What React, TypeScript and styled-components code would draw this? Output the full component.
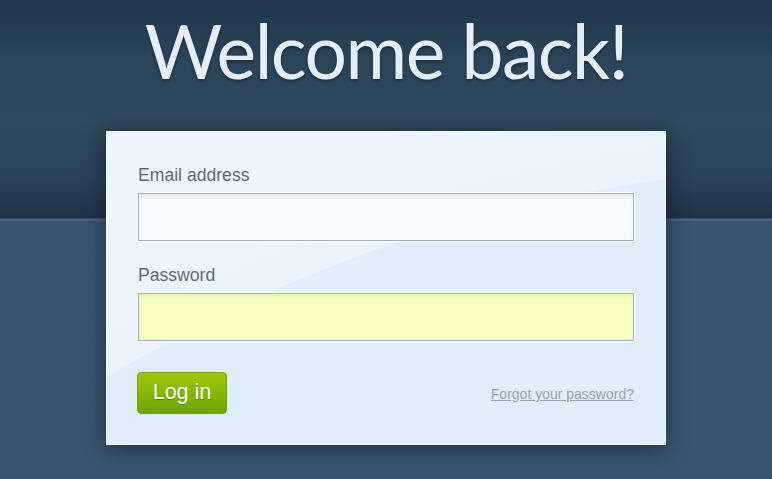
import React from "react";
import styled, { createGlobalStyle } from "styled-components";

const Global = createGlobalStyle`
  html, body { margin: 0; padding: 0; }
  body { background: #3a5572; }
`;

const Page = styled.div`
  min-height: 479px;
  display: flex;
  flex-direction: column;
  align-items: center;
  background:
    linear-gradient(to bottom,
      #21374b 0px,
      #2b4459 60px,
      #30495f 120px,
      #2a4257 180px,
      #1e3246 218px,
      #4c6883 219px,
      #4c6883 220px,
      #3b5673 221px,
      #3a5572 100%);
`;

const Title = styled.h1`
  margin: 0;
  height: 100px;
  font-family: Lato, "Open Sans", sans-serif;
  font-weight: 400;
  font-size: 75px;
  line-height: 101px;
  color: #e6edf5;
  text-shadow: 0 2px 3px rgba(0, 0, 0, 0.35);
  letter-spacing: -1.5px;
`;

const Card = styled.form`
  margin-top: 31px;
  width: 560px;
  box-sizing: border-box;
  padding: 34px 32px 31px;
  background:
    radial-gradient(circle 1466px at 760px 1500px,
      #dfedfa 0px, #e0eefa 1465px, #eaf4fd 1466.5px, #edf6fe 1600px);
  box-shadow: 0 4px 22px rgba(0, 0, 0, 0.45), inset 0 0 0 1px rgba(255, 255, 255, 0.7);
  display: flex;
  flex-direction: column;
`;

const Label = styled.label`
  display: block;
  font-family: "Liberation Sans", Arial, sans-serif;
  font-size: 17.6px;
  line-height: 20px;
  color: #5b6b7d;
  margin-bottom: 8px;
`;

const Input = styled.input<{ $fill: string }>`
  display: block;
  box-sizing: border-box;
  width: 496px;
  height: 48px;
  margin: 0 0 24px;
  border: 1px solid #9cb3cb;
  background: ${(p) => p.$fill};
  box-shadow: 0 0 0 1px rgba(255, 255, 255, 0.9), inset 0 3px 4px rgba(0, 0, 0, 0.06);
  outline: none;
  font-size: 16px;
`;

const Actions = styled.div`
  display: flex;
  align-items: center;
  justify-content: space-between;
  margin-top: 7px;
  width: 497px;
  margin-left: -1px;
`;

const Button = styled.button`
  width: 90px;
  height: 42px;
  box-sizing: border-box;
  border: 1px solid #76a400;
  border-radius: 4px;
  background: linear-gradient(to bottom, #9cc900 0%, #86b800 50%, #70a200 100%);
  color: #ffffff;
  font-family: "Liberation Sans", Arial, sans-serif;
  font-size: 21.5px;
  padding: 0 0 2px;
  text-shadow: 0 1px 1px rgba(60, 90, 0, 0.55);
  cursor: pointer;
`;

const Forgot = styled.a`
  font-family: "Liberation Sans", Arial, sans-serif;
  font-size: 14px;
  color: #97a3af;
  text-decoration: underline;
  margin-top: 2px;
`;

export default function App() {
  return (
    <>
      <Global />
      <Page>
        <Title>Welcome back!</Title>
        <Card onSubmit={(e) => e.preventDefault()}>
          <Label>Email address</Label>
          <Input type="text" $fill="#f5faff" />
          <Label>Password</Label>
          <Input type="password" $fill="#f9fec1" />
          <Actions>
            <Button type="submit">Log in</Button>
            <Forgot href="#">Forgot your password?</Forgot>
          </Actions>
        </Card>
      </Page>
    </>
  );
}
